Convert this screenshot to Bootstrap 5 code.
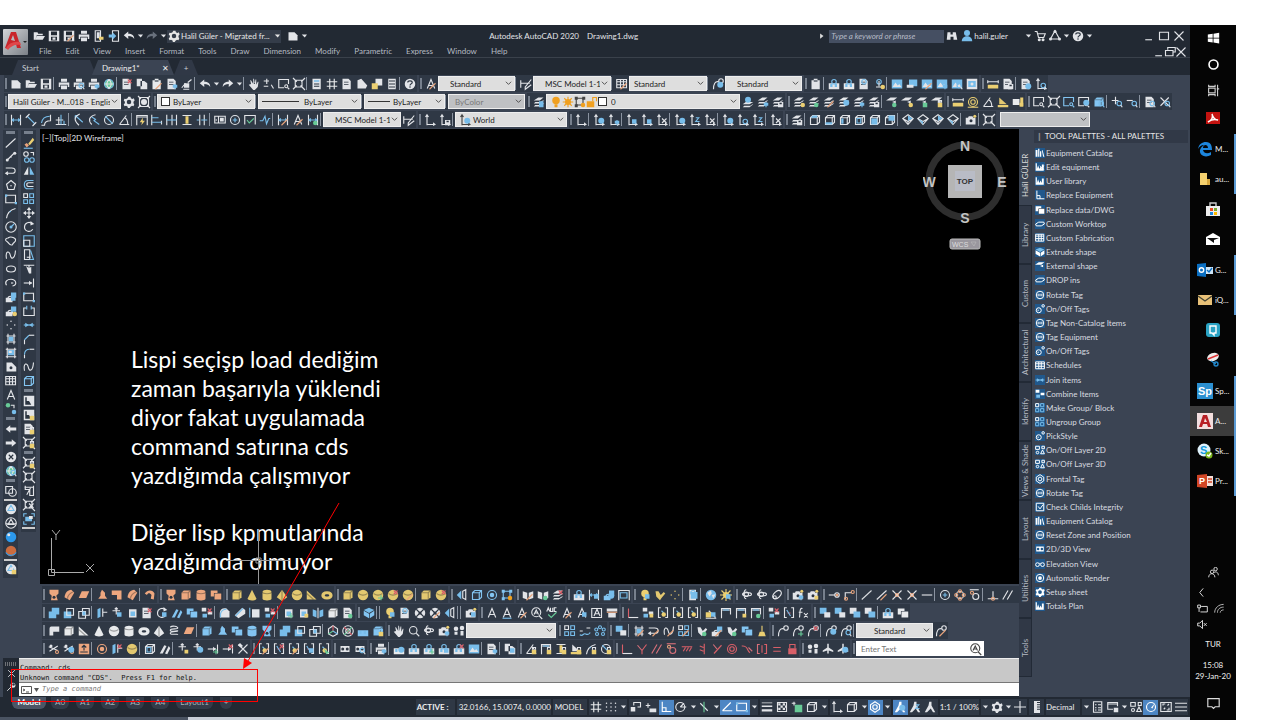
<!DOCTYPE html>
<html lang="tr">
<head>
<meta charset="utf-8">
<meta name="viewport" content="width=device-width, initial-scale=1">
<title>Autodesk AutoCAD 2020 - Drawing1.dwg</title>
<link rel="stylesheet" href="https://cdn.jsdelivr.net/npm/bootstrap@5.3.0/dist/css/bootstrap.min.css">
<style>
:root{--slate:#3b4453;--dark:#222933;--bar:#2f3845;--ink:#e2e4e8;--ac:#6fb5e8}
body{font-family:Lato,"Noto Sans",sans-serif;font-variant-ligatures:none;font-size:7px;line-height:12px;color:var(--ink);background:#fff;min-height:100vh}
.desktop{padding:25px 44px 0 0;min-height:100vh}
.app{background:var(--slate);min-width:0;position:relative}
svg.ic{width:12px;height:12px;display:block;fill:none;stroke-width:1.5;overflow:visible}
.tbtn{--bs-btn-padding-x:0;--bs-btn-padding-y:0;border:0;border-radius:0;width:15px;height:15px;display:flex;align-items:center;justify-content:center;color:var(--ink);flex:none}
.tbtn.tiny{width:8px}
.tbtn:hover{background:#566378}
.tools{display:flex;align-items:center;height:17px;background:var(--bar);flex:none}
.tools .sp{width:3px;height:13px;flex:none;border-left:1px solid #8a93a0}
.tools .grip{width:6px;height:17px;flex:none;background:linear-gradient(#77808d,#77808d) 3px 3px/2px 11px no-repeat,linear-gradient(var(--slate),var(--slate)) 0 0/2px 17px no-repeat}
.barrow{display:flex;align-items:center;height:17px;margin-bottom:1px;overflow:hidden}
.pick{appearance:none;border:1px solid #eee;border-radius:0;height:15px;background:#dedede url("data:image/svg+xml,%3Csvg xmlns='http://www.w3.org/2000/svg' viewBox='0 0 8 8'%3E%3Cpath d='M1 2l3 3 3-3' fill='none' stroke='%23444'/%3E%3C/svg%3E") right 2px center/7px 7px no-repeat;color:#222;font-size:8px;line-height:12px;padding:0 10px 0 4px;flex:none;font-family:inherit}
.pick:disabled{background-color:#bfc1c4;color:#777;opacity:1}
.pickwrap{position:relative;flex:none;display:flex}
.pickwrap>span{position:absolute;left:4px;top:1px;display:flex;pointer-events:none;align-items:center;height:13px}
.swatch{width:9px;height:9px;border:1px solid #333;background:#fff;display:block}
.lt{width:37px;height:1px;background:#333;display:block}
.titlebar{background:var(--dark)}
.logo{width:25px;height:26px;margin:4px 3px 0 3px;background:linear-gradient(135deg,#d3d5d8,#7b8087);border:0;padding:0;border-radius:1px;flex:none}
.topline{height:21px;display:flex;align-items:center;padding-top:1px}
.menu a{color:#b4b9c1;text-decoration:none;font-size:8px;line-height:11px}
.ws{background:#343c49;height:13px;color:#e6e6e6;border:0;padding:0 1px;font-size:8px;line-height:13px;display:flex;align-items:center;gap:1px;width:114px;white-space:nowrap}
.find{background:#454f62;border:0;color:#fff;font-size:8px;font-style:italic;height:13px;padding:0 2px;border-radius:0;width:115px;min-height:0}
.find::placeholder{color:#b7bcc8;opacity:1}
.tabs{height:18px;background:var(--dark);border-top:1px solid #3a414b;padding:2px 0 0 12px;display:flex}
.dtab{border:0;color:#c8ccd2;font-size:8px;line-height:14px;height:15px;background:#303846;padding:0 10px;text-align:left;clip-path:polygon(6px 0,calc(100% - 6px) 0,100% 100%,0 100%);white-space:nowrap}
.dtab.on{background:var(--slate);color:#eee}
.side{width:37px;padding:1px 0 0 3px;gap:3px;flex:none;display:flex;margin-right:3px}
.vt{width:15px;background:var(--bar);align-self:flex-start;padding-bottom:2px}
.vt .tbtn{height:14px}
.vt .grip{display:block;height:6px;margin:0 3px;background:linear-gradient(#77808d,#77808d) 0 1px/100% 3px no-repeat}
.vt .sp{display:block;height:2px;background:#ccc;margin:1px 1px}
.model{background:#000;position:relative;overflow:hidden;flex:1 1 0;min-width:0;min-height:450px}
.note{position:absolute;left:91px;top:216px;width:270px;font:23px/29px Lato,"Noto Sans",sans-serif;font-variant-ligatures:none;color:#fff}
.note p{margin:0 0 28px}
.vlabel{position:absolute;left:2px;top:3px;font-size:8px}
.cube{position:absolute;right:12px;top:9px;width:84px;height:112px}
.ucs{position:absolute;left:8px;bottom:4px}
.cross{position:absolute;left:186px;bottom:-1px}
.cmd{display:flex;background:var(--dark);height:39px;margin-left:3px;flex:none}
.hist{background:#c8c8c8;color:#111;height:25px;border-top:1px solid #eee;border-bottom:1px solid #777;font:7px/10px "DejaVu Sans Mono","Liberation Mono",monospace;padding:4px 1px 0;white-space:pre;overflow:hidden}
.cmdin{border:0;height:13px;font:italic 7px/13px "DejaVu Sans Mono",monospace;padding:0 3px;flex:1;outline:0;min-width:0;color:#333}
.cmdin::placeholder{color:#777;opacity:1}
.status{background:var(--dark);height:20px;display:flex;align-items:center;padding-left:12px;flex:none}
.lay{border:0;background:#333c49;color:#aab0b9;border-radius:0 0 6px 6px;font-size:8px;line-height:10px;padding:0 4px 2px;height:12px;align-self:flex-start}
.lay.on{color:#fff;font-weight:700;background:#4c5666;width:34px}
.sg{display:flex;align-items:center;background:#2f3845;height:16px;color:#eee;margin-right:2px;white-space:nowrap}
.sg .tbtn.hot{background:#4d86c4;color:#fff}
.pal{width:171px;flex:none;display:flex}
.ptabs{width:14px;padding-top:17px;flex:none}
.ptabs button{border:1px solid #222a36;border-right:0;background:#303846;color:#b5bac3;width:13px;height:59px;padding:0;writing-mode:vertical-rl;transform:rotate(180deg);font-size:8px;line-height:11px;display:block;text-align:center;white-space:nowrap;overflow:hidden}
.ptabs button.on{background:var(--slate);color:#ddd;border-color:var(--slate)}
.phead{background:#313947;height:13px;margin:1px 2px 3px 1px;padding-left:2px;line-height:13px;font-size:8px;color:#e6e6e6}
.plist{height:467px;font-size:8px;line-height:14px;list-style:none;margin:0;padding:0 0 0 2px}
.plist a{color:#d9dce0;text-decoration:none;display:flex;align-items:center;gap:1px;white-space:nowrap}
.plist .ic{width:10px;height:10px;background:#20588c;color:#fff;stroke-width:1.6}
.task{width:46px;background:#050505;flex:none;position:relative;color:#eee}
.task button{border:0;background:none;padding:0;height:30px;width:46px;display:flex;align-items:center;justify-content:center;color:#eee;font-size:8px;flex:none}
.task>button:nth-of-type(4n){margin-bottom:1px}
.task button.lb{justify-content:flex-start;padding-left:7px;gap:2px;border-right:2px solid #5b9bd5}
.task button.cur{background:#3c3c3c}
.task svg{width:16px;height:16px;flex:none;fill:none;stroke-width:1.4}
.task .sm svg{width:13px;height:13px}.task .xs svg{width:11px;height:11px}
.task button.sm{height:26px}
.task button.xs{height:16px}
.task button.tall{height:24px}
.foot{height:3px;background:linear-gradient(90deg,#4a5362 188px,#c9ced8 188px)}
.mark-lines{position:absolute;left:0;top:470px;pointer-events:none}
</style>
</head>
<body>
<div class="desktop d-flex">
<div class="app flex-grow-1 d-flex flex-column">
  <header class="titlebar d-flex">
    <button class="logo" aria-label="Application menu"><svg width="25" height="26" viewBox="0 0 25 26"><path d="M2 19L8 3h5l5 16h-4l-1-4H7l-2 5z" fill="#c9252b"/><path d="M8 11l2-5 2 6z" fill="#b7babf"/><path d="M3 19c3-5 8-7 14-6l1 3c-6-1-10 1-13 5z" fill="#e0474b"/><path d="M20 12h4l-2 2z" fill="#222"/></svg></button>
    <div class="flex-grow-1">
      <div class="topline">
        <span class="d-flex" data-i="open save save+pen print export mobile undo dot redo.d dot"></span>
        <button class="ws" type="button"><svg class="ic" data-g="gear"></svg>Halil Güler - Migrated fr...<svg class="ic ms-auto" data-g="dot"></svg></button>
        <span class="d-flex ms-1" data-i="new dot"></span>
        <span class="flex-grow-1 text-center" style="font-size:8px;white-space:pre">Autodesk AutoCAD 2020    Drawing1.dwg</span>
        <svg class="ic me-1" viewBox="0 0 16 16" style="width:6px"><path d="M3 1l9 7-9 7z" fill="#ddd"/></svg>
        <input class="find" aria-label="Search" placeholder="Type a keyword or phrase">
        <span class="d-flex" data-i="bino user.b"></span><span style="font-size:8px">halil.guler</span>
        <span class="d-flex ms-3" data-i="dot cart tri dot | help dot"></span>
        <span class="d-flex ms-5 me-1" data-i="min max close"></span>
      </div>
      <nav class="menu d-flex" aria-label="Menu">
        <div class="d-flex flex-grow-1" style="padding-left:8px;gap:14px" id="menu"></div>
        <span class="d-flex me-1" style="height:11px" data-i="min rest close" data-s="1"></span>
      </nav>
    </div>
  </header>
  <div class="tabs"><button class="dtab" style="width:84px">Start</button><button class="dtab on" style="width:82px;margin-left:-4px">Drawing1*<span style="margin-left:22px">✕</span></button><button class="dtab" style="width:24px;padding:0;text-align:center">+</button></div>

  <div class="toolbars" style="padding-left:2px">
    <div class="barrow"><div class="tools" data-i="|| new open save | print print+lens print+bup globe | sheet+rx copy paste.w+pen sheet+bup brush | undo dot redo dot | hand pm zoomw zoome | calc grid.w sheet folded pal2 list | help || A+pen"></div><select class="pick" style="width:77px;padding-left:11px" aria-label="Text style"><option>Standard</option></select><div class="tools" data-i="| dimstyle"></div><select class="pick" style="width:78px;padding-left:11px" aria-label="Dimension style"><option>MSC Model 1-1</option></select><div class="tools" data-i="| table+pen"></div><select class="pick" style="width:78px" aria-label="Table style"><option>Standard</option></select><div class="tools" data-i="| leader+c"></div><select class="pick" style="width:77px;padding-left:11px" aria-label="Leader style"><option>Standard</option></select><div class="tools" data-i="|| paste | dock+clip dock.w+clip sheet+clip clip+bulb | pic pic2 pic+pen pic+bup pic+lens picf || meas sheet+disk | sheet+info ucs+lens"></div></div>
    <div class="barrow"><div class="tools" data-i="||"></div><select class="pick" style="width:113px" aria-label="Workspace"><option>Halil Güler - M...018 - English</option></select><div class="tools" data-i="gear gearbox ||"></div><div class="pickwrap"><select class="pick" style="width:98px;padding-left:15px" aria-label="Color"><option>ByLayer</option></select><span><i class="swatch"></i></span></div><div class="tools" data-i="|"></div><div class="pickwrap"><select class="pick" style="width:103px;padding-left:45px" aria-label="Linetype"><option>ByLayer</option></select><span><i class="lt"></i></span></div><div class="tools" data-i="|"></div><div class="pickwrap"><select class="pick" style="width:81px;padding-left:28px" aria-label="Lineweight"><option>ByLayer</option></select><span><i class="lt" style="width:22px"></i></span></div><div class="tools" data-i="|"></div><select class="pick" disabled style="width:77px;padding-left:6px" aria-label="Plot style"><option>ByColor</option></select><div class="tools" data-i="|| layers+sheetb"></div><div class="pickwrap"><select class="pick" style="width:194px;padding-left:64px" aria-label="Layer"><option>0</option></select><span><svg class="ic" data-g="bulbo"></svg><svg class="ic" data-g="suno"></svg><svg class="ic" data-g="vpf.k"></svg><svg class="ic" data-g="unlocko"></svg><i class="swatch"></i></span></div><div class="tools" data-i="layersb layers+bup layers+disk || layers+bulb layers+gc layers+pen layers.w+c layers+bup layers+disk | plane+gc plane+bulb plane+lock plane+lk || meas ruler.y angle area.y box.w+y || zoomw zoome zoomw.b zoomw+c cbx.b+lens | plus+lens minus+lens | sheet+lens cross+lens"></div></div>
    <div class="barrow"><div class="tools" data-i="|| dimh dima arcdim dimord | rad jog dia angle | quick base cont spacey brk | tol cmark insp jogl | dimh+pen A+pen dimh+gc |"></div><select class="pick" style="width:78px;padding-left:11px" aria-label="Current dimension style"><option>MSC Model 1-1</option></select><div class="tools" data-i="dimstyle || ucs ucs+disk |"></div><div class="pickwrap"><select class="pick" style="width:112px;padding-left:17px" aria-label="UCS"><option>World</option></select><span><svg class="ic" data-g="ucs.k+c"></svg></span></div><div class="tools" data-i="|| ucs | ucs+c ucs+bup | ucs+sq ucs+sq ucs+x | ucs+c ucs+z ucs+x | ucs+c ucs+lens ucs+z | ucs+x || layers+disk | cube1 cube2 cube3 cube4 cube5 cube6 | iso1 iso2 iso1 iso2 | camera | zoome"></div><select class="pick ms-1" disabled style="width:90px" aria-label="View"><option></option></select></div>
  </div>

  <div class="d-flex flex-grow-1">
    <main class="d-flex flex-column flex-grow-1" style="min-width:0">
      <div class="d-flex flex-grow-1">
        <div class="side">
          <div class="vt" data-i="|| line xline pline pgon rect arc circ cloud spline ell earc blk+sq blk+bulb pts hatch grad region table A gc2 || left right cx globe+lens || union | ball1 tri2 ballb ballo | ball1+lk"></div>
          <div class="vt" data-i="|| eraser copy2 mirror offs array move rot scale stretch trim ext rect brkpt join cham fil spline cube.b || ref ref+lk sheet+lk zoome+lk || zoome+lk zoome zoome2 zoome+x frame |"></div>
        </div>
        <section class="model" aria-label="Drawing">
          <div class="vlabel">[−][Top][2D Wireframe]</div>
          <svg class="cube" viewBox="0 0 84 112" font-family="Liberation Sans" font-weight="700"><circle cx="42" cy="43" r="36" fill="none" stroke="#2e2e2e" stroke-width="7"/><rect x="25" y="27" width="34" height="33" fill="#b5b5b5"/><rect x="32" y="33" width="20" height="20" fill="#b9bcc6"/><text x="42" y="46" font-size="8" text-anchor="middle" fill="#333">TOP</text><g font-size="14" text-anchor="middle" fill="#c4c4c4"><text x="42" y="13">N</text><text x="42" y="85">S</text><text x="6" y="49">W</text><text x="79" y="49">E</text></g><rect x="27" y="101" width="30" height="10" rx="2" fill="#9a979e" stroke="#bbb"/><text x="29" y="109" font-size="7" fill="#ddd" font-weight="400">WCS</text><path d="M48 104h5l-2 4z" fill="none" stroke="#bbb" stroke-width=".6"/></svg>
          <svg class="ucs" width="50" height="50" fill="none" stroke="#aaa"><path d="M3.500 8V42.500H36M.5 39.500h6v6h-6zM4 0l4 5 4-5M8 5v5M38 34l8 8M46 34l-8 8"/></svg>
          <div class="note"><p>Lispi seçişp load dediğim zaman başarıyla yüklendi diyor fakat uygulamada command satırına cds yazdığımda çalışmıyor</p><p>Diğer lisp kpmutlarında yazdığımda olmuyor</p></div>
          <svg class="cross" width="66" height="56" stroke="#999" fill="none"><path d="M32.500 0V56M0 31.500H64M30 29h5v5h-5z"/></svg>
        </section>
      </div>
      <div style="margin:2px 0 0 40px;flex:none">
        <div class="barrow"><div class="tools" data-i="|| loft.o sweep.o plane2.o | ext2.o ell2.o sweep.o | bend.o || loft.o cbx.o cyl.o boxes.o || cbx.y cone.y cyl.y pyr.y sphere.y wedge.y torus.y || cbx.y sphere.y sphere.y+gp sphere.y+rx sphere.y+pen | cbx.y sphere.y+rx || tog cube.b ring.b vpf.b || book+pen book+gc layers+rx || dock+clip dimh+sq blk.b+c quickb || bulb.y+sq brush2.y pts.y | sheetb+clip | globe2 sun.y+sq || orbit orbit orbit2 || camera+bup camera+y || snap1 snap2 | line.o2 line+pen cross2 cross2 dash | cmark quad tan | perp par node"></div></div>
        <div class="barrow"><div class="tools" data-i="|| union2 sub2 int2 | press mv+sq sq3 sheet+rx rot+sq slant.b boxes.b arr+rx | fillet chamf shell arr+rx | sq3+gp sq3+y mirror2 cbx.w sheet+gc || iso.b | | bulb.y+sq sheet+clip wheel wheel+pen tog | | camera+sq || A A+u A+pen lensA abc A+pen A+sq boxA scaleA || perpL arr+y conY conY conY | lk+sq dimv dimv+y dimv+gc | arr+rx conG fx || ord1 ord1 ord2 ord2 | dock+clip boxes.w"></div></div>
        <div class="barrow"><div class="tools" data-i="|| psol cbx.w wedge.w cone.w sphere.w cyl.w torus.w pyr.w helix plane2.o | cbx.b ext2.b boxes.b cyl.b loft.b | union2 sub2 int2 | wire1 wheel2 dock.b cbx.b+lk || hand lens orbit camera+bup foot"></div><select class="pick" style="width:90px" aria-label="Visual style"><option></option></select><div class="tools" data-i="|| array pathar polar || ord1 | hatch+pen pline+pen spline+pen array+pen | brush2+gc blk+pen brush2+gc boxes.b broom || leader leader+gp leader+rx | leader+c leader+lens |"></div><select class="pick" style="width:77px;padding-left:17px" aria-label="Multileader style"><option>Standard</option></select><div class="tools" data-i="leader+pen"></div></div>
        <div class="barrow"><div class="tools" data-i="|| scis scis+c imp.o | ring.o press+rx sphere.y | cube4 slant | mv+y mv+c ext+gp ext+rx tools2 || conY+pen conG+rx conY+pen conG+sq conY+cur || mesh mesh+lens || print+bup | dock.w+c dock+clip dock+clip+gp dock+clip+sq dock+clip+rx pic | sheet+bup | copy+sq || angle+lk dimv+lk spacey+lk area+lk arc+lk dia+lk || perpL coin.r par.r tan.r hor.r ver.r sym.r conc.r smo.r symm.r eq.r lockr.r || foot fly fly+c ||"></div><div class="pickwrap"><input aria-label="Find text" placeholder="Enter Text" style="width:128px;height:15px;font-size:8px;border:1px solid #fff;padding:0 4px"><span style="left:114px"><svg class="ic" data-g="lensA.k"></svg></span></div></div>
      </div>
      <div class="cmd">
        <div style="width:16px" class="d-flex flex-column align-items-center justify-content-between py-1 flex-shrink-0"><svg width="12" height="4"><path d="M0 1h12M0 3h12" stroke="#bbb" stroke-dasharray="1 1"/></svg><svg class="ic" data-g="close" style="width:9px;height:9px"></svg><svg class="ic" data-g="wrench" style="width:10px"></svg></div>
        <div class="flex-grow-1" style="min-width:0"><div class="hist">Command: cds
Unknown command "CDS".  Press F1 for help.</div>
        <div class="bg-white d-flex align-items-center" style="padding-left:2px"><svg width="18" height="10" fill="none" stroke="#555"><path d="M.5 1.500h10v7H.5zM2 4l2 1-2 1M5 7h3"/><path d="M13 3h5l-2.500 4z" fill="#555" stroke="none"/></svg><input class="cmdin" aria-label="Command line" placeholder="Type a command"></div></div>
      </div>
    </main>
    <aside class="pal">
      <div class="ptabs" id="ptabs"></div>
      <div class="flex-grow-1"><div class="phead"><span style="color:#888">❙</span> TOOL PALETTES - ALL PALETTES</div>
      <ul class="plist d-flex flex-column justify-content-between" id="plist"></ul></div>
    </aside>
  </div>
  <footer class="status">
    <button class="lay on">Model</button><div class="d-flex align-self-start flex-grow-1" style="gap:7px;margin-left:5px"><button class="lay">A0</button><button class="lay">A1</button><button class="lay">A2</button><button class="lay">A3</button><button class="lay">A4</button><button class="lay">Layout1</button><button class="lay">+</button></div>
    <div class="d-flex" style="font-size:8px">
      <div class="sg fw-bold" style="width:39px;padding-left:1px">ACTIVE :</div><div class="sg" style="width:94px;padding-left:2px">32.0166, 15.0074, 0.0000</div><div class="sg" style="width:34px;padding-left:2px">MODEL</div>
      <div class="sg" data-i="grid.w dots dot"></div><div class="sg" data-i="snapm dyn perpW! polar2 dot iso3 dot otr! rect! dot"></div><div class="sg" data-i="lw trans sel cube dot"></div><div class="sg" data-i="ucs cube dot gizmo! dot"></div><div class="sg" data-i="man+c! man+z man"></div><div class="sg">1:1 / 100%</div><div class="sg" data-i="dot gear dot plus3"></div><div class="sg" data-i="rul"></div><div class="sg" style="width:34px">Decimal</div><div class="sg" data-i="dot list2 lockui dot isol perf! full ham"></div>
    </div>
  </footer>
  <div class="foot"></div>
  <svg class="mark-lines" width="360" height="212" fill="none" stroke="#f00"><rect x="11.500" y="174.500" width="246" height="32"/><path d="M339 8L248 166"/><path d="M243 174l1-11 8 5z" fill="#f00" stroke="none"/></svg>
</div>
<aside class="task d-flex flex-column" id="task" aria-label="Taskbar">
  <button class="sm" aria-label="Start"><svg viewBox="0 0 16 16"><path fill="#fff" d="M1 3l6-1v5H1zM8 2l7-1v6H8zM1 8h6v5l-6-1zM8 8h7v6l-7-1z"/></svg></button>
  <button class="sm" aria-label="Cortana"><svg viewBox="0 0 16 16"><circle cx="8" cy="8" r="5.500" stroke="#fff" stroke-width="2"/></svg></button>
  <button class="sm" aria-label="Task view"><svg viewBox="0 0 16 16" stroke="#ccc"><path d="M2 1v2h8V1M2 15v-2h8v2M2 5h8v6H2zM13 1v14M12 6h3"/></svg></button>
  <button aria-label="Adobe"><svg viewBox="0 0 16 16"><path fill="#c41310" d="M1 2h14v12H1z"/><path stroke="#fff" d="M7 4c2 5-2 7-4 8 4-3 7-3 10-2-3 0-5-2-6-6z"/></svg></button>
  <button class="lb"><svg viewBox="0 0 16 16"><path fill="#1d86dd" d="M1 8C2 3 5 1 9 1c5 0 6 4 6 8H6c1 4 5 4 8 2v3c-5 3-12 1-11-5 1-3 3-4 4-5-3 0-5 2-6 4zm5-1h5c0-4-5-4-5 0z"/></svg>M...</button>
  <button class="lb"><svg viewBox="0 0 16 16"><path fill="#f5d16e" d="M3 2h7v12H3z"/><path fill="#d9a83c" d="M10 8h3v6h-3z"/></svg>au...</button>
  <button aria-label="Store"><svg viewBox="0 0 16 16"><path fill="#eee" d="M1 5h14v10H1z"/><path stroke="#ccc" d="M5 5V2h6v3"/><path fill="#e64b21" d="M5 7h3v3H5z"/><path fill="#7a3" d="M9 7h3v3H9z"/><path fill="#28d" d="M5 11h3v3H5z"/><path fill="#fb0" d="M9 11h3v3H9z"/></svg></button>
  <button aria-label="Mail"><svg viewBox="0 0 16 16"><path fill="#fff" d="M1 6l7-4 7 4v8H1z"/><path fill="#111" d="M2 7h12L9 9v3z"/></svg></button>
  <button class="lb"><svg viewBox="0 0 16 16"><path fill="#0a6fc2" d="M0 2l9-1v14l-9-1z"/><path fill="#cfe5f7" d="M9 5h7v7H9z"/><circle cx="4.500" cy="8" r="2.200" stroke="#fff"/><path stroke="#0a6fc2" d="M10 8l2 2 3-4"/></svg>G...</button>
  <button class="lb"><svg viewBox="0 0 16 16"><path fill="#e8c178" d="M1 3h14v10H1z"/><path stroke="#443" d="M1 4l7 5 7-5"/></svg>iQ...</button>
  <button aria-label="Quick Assist"><svg viewBox="0 0 16 16"><rect x="1" y="1" width="14" height="14" rx="3" fill="#2aa3c4"/><path stroke="#fff" d="M5 4h6v7H9v2l-2-2H5z"/></svg></button>
  <button aria-label="Snip"><svg viewBox="0 0 16 16"><ellipse cx="8" cy="5" rx="6" ry="4" fill="#eee" transform="rotate(-20 8 5)"/><path stroke="#d33" d="M3 7l10-4"/><path stroke="#28c" d="M6 9l5 3"/><circle cx="11" cy="12" r="2" stroke="#28c"/></svg></button>
  <button class="lb"><svg viewBox="0 0 16 16"><path fill="#2b8fd0" d="M0 0h16v16H0z"/><text x="1" y="12" font-size="11" font-weight="700" fill="#fff" font-family="Liberation Sans">Sp</text></svg>Sp...</button>
  <button class="lb cur"><svg viewBox="0 0 16 16"><path fill="#f3dedd" d="M0 0h16v16H0z"/><path fill="#b81f24" fill-rule="evenodd" d="M2 14L6 2h4l4 12h-3l-1-3H6l-1 3zM7 9h3L8 5z"/></svg>A...</button>
  <button class="lb"><svg viewBox="0 0 16 16"><circle cx="7" cy="7" r="6.500" fill="#dff2fc"/><text x="3" y="11" font-size="11" font-weight="700" fill="#1199dd" font-family="Liberation Sans">S</text><circle cx="12" cy="12" r="3.500" fill="#7ab51d"/><path stroke="#fff" d="M10 12l2 1 2-3"/></svg>Sk...</button>
  <button class="lb"><svg viewBox="0 0 16 16"><path fill="#d24625" d="M0 2l10-1v14L0 14z"/><path fill="#f4ded8" d="M10 3h6v10h-6z"/><path stroke="#d24625" d="M11 6h4M11 9h4"/><text x="2" y="11" font-size="9" font-weight="700" fill="#fff" font-family="Liberation Sans">P</text></svg>Pr...</button>
  <div class="mt-auto d-flex flex-column">
  <button class="xs tall" aria-label="People"><svg viewBox="0 0 16 16" stroke="#ddd"><circle cx="6" cy="7" r="2.500"/><circle cx="11" cy="3" r="2.500"/><path d="M1 15c0-7 9-7 9 0M9 8c3-2 6 0 6 4"/></svg></button>
  <button class="xs lb border-0" aria-label="Hidden icons"><svg viewBox="0 0 16 16" stroke="#ddd"><path d="M9 2L4 8l5 6"/></svg></button>
  <button class="xs lb border-0" style="gap:6px" aria-label="Battery and network"><svg viewBox="0 0 16 16" stroke="#ddd"><path d="M6 5h9v8H5M1 3v4h4V3zM3 7v6"/></svg><svg viewBox="0 0 16 16" stroke="#bbb"><path d="M1 14C1 7 7 2 14 2M5 14c0-5 4-8 9-8M9 14c0-2 2-4 5-4"/></svg></button>
  <button class="xs lb border-0" aria-label="Volume"><svg viewBox="0 0 16 16" stroke="#ddd"><path d="M1 6h3l4-4v12l-4-4H1zM10 6l4 4M14 6l-4 4"/></svg></button>
  <button class="xs tall">TUR</button>
  <button class="text-center" style="line-height:11px;white-space:nowrap"><span>15:08<br>29-Jan-20</span></button>
  <button style="height:34px" class="sm" aria-label="Notifications"><svg viewBox="0 0 16 16" stroke="#ddd"><path d="M1 2h14v10h-5l-2 2-2-2H1z"/></svg></button>
  </div>
</aside>
</div>
<script src="https://cdn.jsdelivr.net/npm/bootstrap@5.3.0/dist/js/bootstrap.bundle.min.js"></script>
<script>
// Each icon is a list of "<mode><colour> <path>" layers on a 16 x 16 grid; Ox,y,r is a circle.
const cube='M2 5l3-3h9v9l-3 3H2zM2 5h9v9M11 5l3-3';
const G={
new:'fw M2 3h8l4 4v7H2z',open:'fw M1 13V3h5l1 2h6v2H5l-2 6zM5 8h11l-3 5H3z',save:'fw M1 1h14v14H1zM4 2v5h8V2zM4 9v5h8V9z|fw M6 10h4v3H6z',
print:'fw M4 1h8v4H4zM1 6h14v6h-2V9H3v3H1zM4 10h8v5H4z',export:'sw M3 1h7v14H3z|fw M5 3h4v8H5z|fy M8 9h6v4H8z',mobile:'sw M6 1h8v14H6z|fb M1 6h5V3l5 5-5 5v-3H1z',
undo:'fw M1 7l6-5v3c5 0 8 2 8 7-2-3-4-4-8-4v4z',redo:'fw M15 7L9 2v3c-5 0-8 2-8 7 2-3 4-4 8-4v4z',dot:'fw M5 6h7l-3 4z',
gear:'fw M7 1h3l.5 2 2 1 2-1 1 3-1.500 1.500v2L15 11l-1 2.500-2-.5-2 1.200L9 16H6.500L6 14l-2-1-2 .5L1 11l1.500-1.500v-2L1 6l1-2.500 2 .5 2-1zO8,8,3',gearbox:'sw M2 2h12v12H2z|fw O8,8,4|sw M0 0l4 4M16 0l-4 4M0 16l4-4M16 16l-4-4',
bino:'fw M2 3h4v3h3V3h4l2 10h-5V9H6v4H1z',user:'fb O8,4,4|fb M1 15c0-9 14-9 14 0z',cart:'sw M1 2h3l2 8h7l2-5H5|fw O7,13,2|fw O12,13,2',tri:'sw M8 1l6 11H2z|fw O8,2,2|fw O2,12,2|fw O14,12,2',
help:'fw O8,8,7|sk M5 6c0-3 6-3 6 0 0 2-3 1-3 4M8 11v2',min:'sw M3 13h9',max:'sw M2 3h12v10H2z',close:'sw M2 2l12 12M14 2L2 14',rest:'sw M5 5V2h10v6h-3M2 6h10v7H2z',
globe:'fg O8,8,6|sb O8,8,6|sw M2 8h12M8 2c-4 4-4 8 0 12 4-4 4-8 0-12',globe2:'fb O8,8,7|fw M3 5l5-3 1 4-3 4zM9 8l5-1-3 6z',sheet:'fw M2 1h8l3 3v11H2zM4 5v1h6V5zM4 8v1h6V8z',sheetb:'fw M3 1h9v14H3z|fb M5 4h9v9H5z',copy:'fw M1 1h7v10H1zM6 4h5l4 3v8H6z',paste:'fw M2 3h3V1h5v2h3v12H2z|sk M5 4h5',brush:'sw M1 13l5-6M3 15h8|fw M4 7h7v6H4z|sw M9 6l5-4',
hand:'fw M4 8L3 3h1l3 5V1h1l1 7 1-6h1l0 7 2-4h1l-1 7-4 4H7L1 9z',pm:'sw M1 4h7M5 1v7M1 11h6M11 9l3 5',lens:'sw O7,7,5|sw M11 11l4 4',zoomw:'sw M8 13H1V2h13v6|sw O11,11,2|sw M13 13l2 2',zoome:'sw M3 3h9v9H3zM0 0l5 5M16 0l-5 5M0 15l5-5M10 10l6 6',zoome2:'sw M2 3h12M3 1v5h6v8h5V1M10 4l-5 9',frame:'sb M1 5V1h4M11 1h4v4M15 11v4h-4M5 15H1v-4|fb M3 5h9v6H3z|fw M8 4h5v4H8z',
calc:'fw M2 1h11v14H2z|fb M4 3h7v2H4z|sk M4 8h7M4 11h7',grid:'sw M5 1v14M11 1v14M1 5h14M1 11h14',folded:'fw M2 3l5-2 8 9-2 4H2z',pal2:'fw M6 1h9v9H6z|fy M1 7h8v8H1z',list:'fw M3 1h10v14H3z|sk M4 4h8M4 8h8M4 12h8',list2:'sw M2 1h11v14H2z|sw M4 5h2M8 5h4M4 9h2M8 9h4M4 12h2M8 12h4',
A:'sw M3 14L8 2l5 12M5 10h6',dimstyle:'sw M1 7h12M1 3v10M15 2L7 12v3l8-6',table:'sw M1 2h13v11H1zM1 5h13M1 9h13M6 2v11M10 2v11',leader:'sw M2 15C2 8 4 4 9 5|sw O12,4,3',
dock:'fw M1 7h14v8H1z|fb M3 8h3v4H3zM9 8h3v4H9z',clip:'sb O8,5,3|sw M8 4v7M4 12h8',pic:'fb M1 2h14v12H1z|fw M2 12l4-6 3 4 2-2 3 4z',pic2:'fb M4 2h11v9H4z|fw M1 9h9v4H1z',picf:'fw M1 1h14v14H1z|fb M3 4h10v8H3z|fw O8,8,2',meas:'sw M1 3v4M15 3v4M1 5h14|fy M1 9h14v5H1z',
layers:'fw M1 6l6-4h7l-5 4zM1 10l2-2h7l3-2h2l-6 4zM1 14l2-2h7l3-2h2l-6 4z',layersb:'fw M1 11l4-3h10l-5 3z|fw M1 15l2-2h8l3-2h1l-5 4z|fb O8,5,4',bulb:'fy O8,6,5|fy M6 11h4v4H6z',sun:'fy O8,8,4|sy M8 0v16M0 8h16M2 2l12 12M14 2L2 14',
bulbo:'fY O8,6,5|fY M6 11h4v4H6z',suno:'fY O8,8,4|sY M8 1v14M1 8h14M3 3l10 10M13 3L3 13',unlocko:'fY M1 7h10v8H1z|sY M9 7V2h5v5',
vpf:'sw M3 3h9v9H3z|fw M1 1h4v4H1zM11 1h4v4h-4zM1 11h4v4H1z|fY O12,12,3',
plane:'fw M0 6l6-4h9l-5 4z|fw M8 8l5-2v4z',ruler:'sy O8,8,6|sw O8,8,3|sw M1 15h14',angle:'sw M2 14L11 2M2 14h13M9 5c4 2 4 5 4 9',area:'fw M3 2l10 9H3z|fy M1 12h14v3H1z',box:'fw M1 4h9v8H1z|fy M11 2h4v12h-4z',cube:'sw '+cube,cbx:'fw M2 5l3-3h9v9l-3 3H2z|sh M2 5h9v9M11 5l3-3',plus:'sw M1 6h9M6 1v10',minus:'sw M1 6h8',cross:'sw M2 2l11 11M13 2L2 13',plus3:'sw M0 8h16M8 0v16',
dimh:'sw M2 1v14M14 1v14|sb M2 8h12M5 6L3 8l2 2M11 6l2 2-2 2',dima:'sb M3 3l10 10|sw M1 5l5-5M10 16l5-5',arcdim:'sb M2 12C3 6 6 3 13 3|sw M2 15h4c0-4 3-6 8-6V1',dimord:'sw M1 14h14M5 14V4M1 8h10|sb M8 1v13M12 9v5',rad:'sb M3 2l10 9M3 2v4M3 2h4|sw M9 0C0 4 2 10 8 15',jog:'sw M10 1C1 3 0 9 5 14|sb M5 4l5 3-2 2 7 5',dia:'sw O8,8,6|sb M3 3l10 10',quick:'sw M1 15V2h14v13M1 4h14|fy M9 5l-4 6h3l-1 4 5-6H9z',quickb:'sw M1 15V2h14v13|sb M3 5h9v7H3z',base:'sw M1 1v14M14 9v5|sb M1 5h9M1 11h13',cont:'sw M1 1v14M8 1v14M14 1v14|sb M1 8h13',spacey:'sw M2 2h12M2 14h12|fy M6 3h4v10H6z',brk:'sw M5 1v14M11 1v14|sb M1 8h3M7 8h8',
tol:'sw M1 3h14v9H1zM6 3v9|fw M8 5h5v5H8z|fw O3,8,1',cmark:'sw O8,8,6|sb M8 5v6M5 8h6',insp:'sw M1 14V2h14v12|sg M4 8l3 4 6-6',jogl:'sb M1 9h4l3-6 2 10 3-7h2',ucs:'sw M4 15V2M2 4l2-3 2 3M4 14h9|fw M12 11l4 3-4 2z',cube1:'sw '+cube+'|fb M2 5h9V2H5z',cube2:'sw '+cube+'|fb M2 11h9v3H2z',cube3:'sw '+cube+'|fb M3 6h3v7H3z',cube4:'sw '+cube+'|sb M4 6h5v6H4z',cube5:'sw '+cube+'|fb M3 6h8v8H3z',cube6:'sw '+cube+'|fb M6 2h8v7H6z',
iso1:'sw M8 1l7 5-7 8-7-8zM1 6l7 4 7-4M8 10v4|fb M8 2l6 4-6 3z',iso2:'sw M8 1l7 5-7 8-7-8zM1 6l7 4 7-4|fb M2 7l6 3v4z',iso:'fb M8 1l7 3-7 4-7-4z|fw M1 5l7 4v6l-7-4zM15 5L9 9v6l6-4z',camera:'fw M1 5h3l1-2h5l1 2h3v9H1z|fk O8,9,2|fy O13,3,2',
line:'sw M1 14L14 2',xline:'sw M2 13L13 2|fw O3,12,2|fw O13,3,2|fw O8,8,1',pline:'sw M1 4h8c6 0 6 7 0 7H1M4 9l-3 2 3 2',pgon:'sw M8 2l6 5-2 7H4L2 7z|fw O8,9,1',rect:'sw M1 3h13v10H1z|fb M0 2h3v3H0zM13 12h3v3h-3z',arc:'sw M2 15C3 8 6 4 14 2|fb O7,6,1',circ:'sw O8,8,7|sb M8 8l4-4|fb O8,8,2',cloud:'sw M4 4c4-3 11 0 10 3 1 2-4 3-4 6-4 2-5-3-7-4-4-2-2-5 1-5z',spline:'sw M2 13C0 2 6 2 7 8s6 7 7-6',ell:'sw M8 4C0 4 0 12 8 12S16 4 8 4',earc:'sw M2 11C-1 6 3 3 8 3c7 0 9 8 2 9|sw M8 8h3',
blk:'fw M1 9h9v6H1z|sw O7,10,3|fb M8 2h7v7H8z',pts:'fw O8,3,1|fw O3,8,1|fw O13,8,1|fw O8,13,1',hatch:'sw M2 4h12M2 12h12M4 1v14M12 1v14|fb M5 5h6v6H5z',grad:'sw M1 3h14M1 13h14M3 1v14M13 1v14|fb M4 4h8v7H4z|fw M5 5h4v3H5z',region:'fw M2 2h7l6 6v6H2zO8,9,2',gc2:'fg O4,3,3|fb O12,12,3|sw M8 3h4v4',left:'fw M1 8l6-5v3h8v4H7v3z',right:'fw M15 8L9 3v3H1v4h8v3z',cx:'fw O8,8,7|sk M5 5l6 6M11 5l-6 6',union:'sw M1 2h9v9H1z|sw O10,10,5',ball1:'fw O8,8,7|sb M8 3l4 7H4z',tri2:'sw O8,8,7|sw M8 3l4 7H4zM1 9h14',ballb:'fB O8,8,7|fw O5,5,2',ballo:'fO O8,8,7|sB M1 10c4 6 12 4 14 0',
eraser:'fy M7 9L13 1l2 3-6 7z|fo M2 10l3-2 3 3-3 3z|sb M1 15h12',copy2:'sw O4,4,3|sw M10 2h4v4|sb O5,12,3|sb O12,12,3',mirror:'fw M7 2v11H1z|fb M9 2v11h6z',offs:'sb M14 2H7c-7 0-7 11 0 11h7|sw M14 5H8c-4 0-4 5 0 5h6',array:'sw M1 1h5v5H1z|sb M9 1h5v5H9zM1 9h5v5H1zM9 9h5v5H9z',move:'fw M8 0l3 4H5zM8 16l3-4H5zM0 8l4-3v6zM16 8l-4-3v6z|sw M3 8h10M8 3v10',rot:'sw M13 11C10 16 2 14 2 8s7-8 10-4|fw M10 0l5 4-5 2z',scale:'sb M1 1h14v14H1z|sw M1 7h8v8H1z',stretch:'sw M2 1h7v13H2z|sb M10 2l4 12H9|sw M5 11h5',trim:'sw M1 3h14M8 3v5|fw M4 4l4 3 3-2v9H8l-2-5z',ext:'sw M14 2v12|sw M1 8h11|fw M8 5l4 3-4 3z',brkpt:'sw M5 4H1v10h14V4h-4|sb M5 1v5M11 1v5',join:'sb M1 8h14|fb M3 5l5 3-5 3zM13 5L8 8l5 3z',cham:'sw M2 15V9|sb M2 9l6-6|sw M8 3h7',fil:'sw M2 15v-5|sb M2 10c0-5 3-7 7-7|sw M9 3h6',ref:'fw M1 1h14v14H1z|fk M3 3v10h8l-3-5H5V3z',
loft:'fw M2 1h12v5l-3 3 2 6H4l1-6-3-3z|fk O8,11,2',sweep:'fw M2 11C3 4 6 2 11 1l4 4-6 10z|sh M6 13C6 8 9 6 13 4',plane2:'fw M5 3h10l-4 9H1z',ext2:'fw M3 13h12l-3-4V5L8 1 6 5v4z',ell2:'fw M1 2h13v12H8V8H1z',bend:'fw M1 6C5 0 12 1 14 6l-1 8-4-1 1-5c-2-3-5-3-6 0z',cyl:'fw M2 4c0-4 12-4 12 0v9c0 3-12 3-12 0z|sh M2 4c0 3 12 3 12 0',boxes:'fw M1 2h9v8H1z|sk M6 6h9v8H6z|fw M6 6h9v8H6z',cone:'fw M8 1l6 12c-1 3-11 3-12 0z',pyr:'fw M8 1l7 10-7 5-7-5z|sh M8 1v14',sphere:'fw O8,8,7|sh M2 6c4 3 8 3 12 0',wedge:'fw M1 2l13 12H1z|sh M1 6l9 8',torus:'fw M8 3C-2 3-2 14 8 14S18 3 8 3zM8 7c4 0 4 3 0 3s-4-3 0-3z',tog:'fb M7 2L1 8l6 6z|sw M9 3l4-2v13l-4-2z',ring:'sw O8,8,6|fw O8,8,3',book:'fw M1 3l6 2v9l-6-2zM15 3L9 5v9l6-2z',brush2:'fw M2 3h4l3 5 4-4 2 2-5 6-2 3-5-5z',orbit:'sw O7,7,3|sw M2 7c0 3 12 3 12 0S2 4 2 7M7 1c-4 0-4 12 0 12',orbit2:'sw M3 12C0 8 9-1 13 3c3 4-5 13-10 9z|sw O5,11,2',
snap1:'sw M1 8h8|fo O12,8,2|sw O12,8,3',snap2:'sw M3 14V5h8|so O4,13,2|so O13,4,2',cross2:'sw M2 2l12 12M14 2L2 14|so O8,8,2',dash:'sw M1 8h14',quad:'sw O8,8,5|so O8,3,2|so O8,13,2|so O3,8,2|so O13,8,2',tan:'sw O9,10,4|so O4,5,2|sw M1 1h12',perp:'sw M1 13h14M8 3v10|so O8,13,2',par:'sw M1 14L8 2M7 14l7-12',node:'sw O8,8,4',
union2:'fb M5 1h10v9h-4v5H1V6h4z',sub2:'fb M1 6h10v9H1z|sw M5 2h9v9H5z',int2:'sw M1 6h9v9H1zM6 2h9v9H6z|fb M6 6h4v5H6z',press:'fb M2 3l4-2v12l-4 2z|sw M9 2v11M9 7h6',mv:'sw M7 1v9M2 5h10M5 3l2-2 2 2',sq3:'fw M4 3h10v11H4z|fb M6 6h6v6H6z',slant:'fw M1 14L7 3l3 1-5 10zM8 14l5-10 2 3-4 8z',arr:'fw M1 1h6v5H1zM9 6h6v4H9z|fb M2 9h6v5H2z',fillet:'fw M1 14V8c0-5 4-7 9-6l4 4v8z|sb M2 14V9c1-4 4-6 8-6',chamf:'fw M1 11L11 1l4 3v5L6 15z|sb M2 12L12 2',shell:'fw M4 3h10v11H4z|sb M1 1v13',mirror2:'fb M1 3l5 2v9l-5-2zM15 3l-5 2v9l5-2z|sw M8 1v14',wheel:'fw O8,8,7|sk M3 3l10 10M13 3L3 13|fk O8,8,2',lensA:'sw O7,7,6|sw M11 12l4 4M4 10l3-6 3 6M5 8h4',abc:'sw M1 6l2-5 2 5M6 1v5h3V1M14 1h-3v5h3|sg M3 10l4 4 7-7',boxA:'sw M1 2h13v12H1zM4 12l4-9 4 9M5 9h5',scaleA:'fw M1 2h14v4H1zM3 8h10v6H3z|so M1 7h14',perpL:'sr M2 2v12|sw M2 14h13',conY:'sw M5 1H2v13h3M11 1h3v13h-3|sb M6 5l3 3|fy O9,10,3',conG:'sw M5 1H2v13h3M11 1h3v13h-3|sr M6 8h4|sb M5 4l5 8',dimv:'sw M2 15V2h12v8M2 4h12|sb M4 4l8 0',lk:'sw M1 15h14M5 5l9 9|fy M1 7h7v7H1z',fx:'sw M6 2c-4-1-3 4-4 12M1 7h5M8 8l5 6M13 8l-5 6',
ord1:'fb M1 1h9v8H1z|fw M7 7h8v7H7z',ord2:'fw M1 1h9v8H1z|fb M6 6h9v8H6z',psol:'fw M2 14V5c0-3 2-3 4-3h9v7H7v5z',helix:'sw M3 3c3-3 10-1 10 1S3 4 3 7s10 0 10 1-10 0-10 3 10 0 10 2',wire1:'sw M8 1l6 4v7l-6 3-6-3V5z|sr M8 1v7|sg M2 12l6-4|sb M14 12L8 8',wheel2:'sw O8,8,7|sr M3 3l10 10|sg M13 3L3 13|sw O8,8,3',foot:'fw O4,5,3|fw M2 9h4v4H2z|fw O12,4,3|fw M10 8h4v6h-4z',pathar:'sw M1 8h4M10 4h5|sb M1 13c5 3 4-3 8-1s5-1 6-2',polar:'sb O8,3,2|sb O3,6,2|sb O13,6,2|sb O4,12,2|sb O12,12,2',broom:'sy M8 1v8|fy M5 9h6l2 6H3z',
scis:'sw M1 5l12 5M2 11L13 4|fw O4,4,2|so O12,12,2',imp:'fw M1 1h14v14H1z|sk M8 10V4M5 6l3-3 3 3M3 12h10',tools2:'sw M2 2l12 12M14 2L2 14|fw M1 3l3-3 4 4-3 2z',mesh:'fw M2 4h12v8H2zO5,8,2O11,8,2',coin:'sw M2 3l6 7|sr M8 10l6-8M8 10v5',hor:'sr M1 5h14M3 11l3-5M7 11l3-5M11 11l3-5',ver:'sr M11 1v14M5 4l5 2M5 9l5 2',sym:'sw M3 2l5 6|sr M14 3L4 14',conc:'sr O8,8,6|sr O8,8,3',smo:'sr M1 4c9-1 6 6 11 9|sw M10 6l5 5',symm:'sw M5 2H2v12h3|sr M11 2h3v12h-3M8 3v10',eq:'sr M3 6h10M3 11h10',lockr:'fr M3 7h11v8H3z|sr M5 7V2h7v5',fly:'fw M7 1h2v5l6 4v2l-6-2v4H7v-4l-6 2v-2l6-4z',
wrench:'sw M2 14l7-7|fw O11,5,4|fk O12,4,2',dots:'fw O2,3,1|fw O8,3,1|fw O14,3,1|fw O2,8,1|fw O8,8,1|fw O14,8,1|fw O2,13,1|fw O8,13,1|fw O14,13,1',snapm:'fw M1 8h6v6H1z|sw M5 6V2h9v6h-4',dyn:'sw M1 6h6M4 3v6|fw M6 10h9v5H6z',perpW:'sw M3 1v13h12M3 9h5v5',polar2:'sw O7,8,6|sw M7 8h8M7 8l5-5',iso3:'sw M3 3l10 10|sg M8 1v14',otr:'sw M2 13L13 2M2 13h13',lw:'fw M1 2h14v1H1zM1 6h14v2H1zM1 11h14v3H1z',trans:'sw M2 2h12v12H2z|fw M3 3h3v3H3zM9 3h3v3H9zM6 6h3v3H6zM12 6h2v3h-2zM3 9h3v3H3zM9 9h3v3H9z',sel:'fg M5 5h10v10H5z|sw M1 3h5M4 1v5',gizmo:'sw M8 1l6 4v6l-6 4-6-4V5z|sw O8,8,3',man:'fw M7 1h3v5l5 9h-3L9 10l-5 5H1l5-9z',rul:'fw M4 0h8v16H4z|sk M8 2h4M8 5h4M8 8h4M8 11h4',lockui:'sw M8 11H1V2h13v5M1 4h13|fw M9 9h6v6H9z',isol:'sw M1 2h6v5H1zM11 2h4v4h-4z|sw O4,12,2|sw M12 8l3 6H9z',perf:'sw O8,8,6|fw M8 9l5-6-3 7z',full:'sw M1 2h14v12H1z|sw M4 6V4h3M12 9v3H9M5 11l2-2M10 6l2-2',ham:'sw M0 3h16M0 8h16M0 13h16',
bars:'fw M1 3h3v11H1zM5 1h2v13H5zM8 5h2v9H8zM12 3l3 11h-2L11 4z',cal:'sw M1 3h14v11H1zM1 6h14M1 10h14M6 3v11M10 3v11',oo:'sw O8,8,6|sw M5 6v4M8 6v4M11 6v4',check:'sw M2 2h12v12H2zM5 7l3 4 5-7',wt:'sw M1 8l5-3h8l1 3-5 3H2z',glass:'sw O4,9,3|sw O12,9,3|sw M7 7h2',chart:'fw M1 14V2h2v9l2-6 2 6 2-4 2 4V4h3v10z',tag2:'sw O6,10,4|sw O13,3,2|sw M5 9v2'};
const O={pen:'so M6 15L14 7',lens:'sb O11,10,3|sw M13 12l2 3',bup:'fb M9 9h6v4H9z|sb M12 8v7',rx:'sr M9 2l5 5M14 2L9 7',gp:'sg M12 8v7M8 12h7',clip:'sb O8,5,3',bulb:'fy O13,12,3',disk:'fw M8 8h7v7H8z|fk M10 9h3v2h-3z',info:'fb O11,11,4',gc:'fg O11,12,3',c:'fb O11,9,4',lock:'fg M9 9h6v6H9z',lk:'fy M9 9h6v6H9z|sw M10 9V6h4v3',sq:'fb M8 7h6v6H8z',x:'sw M8 6l6 6M14 6l-6 6',z:'sb M9 5h4l-4 5h5',sheetb:'fb M8 7h6v8H8z',y:'fy M10 9h5v5h-5z',u:'sb M2 15h12',cur:'fg M8 8l7 5-4 2z'};
const K={w:'currentColor',b:'#78bdea',y:'#ebcf72',r:'#d85f68',g:'#68ca97',o:'#e9a47c',k:'#2b3440',h:'rgba(40,40,40,.4)',Y:'#f0a020',B:'#2c99ec',O:'#ca6c3f'};
const T={o:'#eda77f',y:'#e3c870',b:'#83c5f2',w:'#e8eaec',r:'#d7707a',k:'#444',d:'#69717d',o2:'#d9dce0'};
function layers(s){return s.split('|').map(l=>{
  const d=l.slice(3).replace(/O([\d.]+),([\d.]+),([\d.]+)/g,(m,x,y,r)=>`M${x-r} ${y}a${r} ${r} 0 1 0 ${2*r} 0a${r} ${r} 0 1 0 ${-2*r} 0`);
  const c=K[l[1]];return `<path d="${d}" fill-rule="evenodd" ${l[0]=='f'?`fill="${c}"`:`stroke="${c}"`}/>`}).join('')}
function draw(tok){const [b,...ov]=tok.replace('!','').split('+');const [n,t]=b.split('.');
  return [layers(G[n]||G.rect)+ov.map(o=>O[o]?layers(O[o]):'').join(''),t?T[t]:'']}
document.querySelectorAll('[data-i]').forEach(el=>{
  el.innerHTML=el.dataset.i.split(' ').map(t=>{
    if(t=='|')return '<i class="sp"></i>';if(t=='||')return '<i class="grip"></i>';
    const [p,c]=draw(t);
    return `<button type="button" class="btn tbtn${t=='dot'?' tiny':''}${t.endsWith('!')?' hot':''}" aria-label="${t.replace(/\W/g,' ')}"><svg class="ic" viewBox="0 0 16 16"${c?` color="${c}"`:''}>${p}</svg></button>`}).join('');
  if(el.dataset.s)el.querySelectorAll('.tbtn').forEach(b=>{b.style.width='11px';b.style.height='11px'})});
document.querySelectorAll('[data-g]').forEach(s=>{const [p,c]=draw(s.dataset.g);s.setAttribute('viewBox','0 0 16 16');if(c)s.setAttribute('color',c);s.innerHTML=p});
document.getElementById('menu').innerHTML='File Edit View Insert Format Tools Draw Dimension Modify Parametric Express Window Help'.split(' ').map(m=>`<a href="#">${m}</a>`).join('');
document.getElementById('ptabs').innerHTML=['Halil GÜLER','Library','Custom','Architectural','Identify','Views &amp; Shade','Layout','Utilities','Tools'].map((t,i)=>`<button type="button" class="${i?'':'on'}">${t}</button>`).join('');
document.getElementById('plist').innerHTML=[['Equipment Catalog','bars'],['Edit equipment','chart+x'],['User library','chart'],['Replace Equipment','perpW'],['Replace data/DWG','boxes'],['Custom Worktop','wt'],['Custom Fabrication','table'],['Extrude shape','iso'],['External shape','plane'],['DROP ins','wt'],['Rotate Tag','oo'],['On/Off Tags','tag2'],['Tag Non-Catalog Items','oo'],['Tag Equipment','oo'],['On/Off Tags','tag2'],['Schedules','cal'],['Join items','join'],['Combine Items','arr'],['Make Group/ Block','array'],['Ungroup Group','array'],['PickStyle','tag2'],['On/Off Layer 2D','isol'],['On/Off Layer 3D','isol'],['Frontal Tag','gizmo'],['Rotate Tag','oo'],['Check Childs Integrity','check'],['Equipment Catalog','bars'],['Reset Zone and Position','oo'],['2D/3D View','mesh'],['Elevation View','glass'],['Automatic Render','ring'],['Setup sheet','gear'],['Totals Plan','chart']].map(([t,g])=>`<li><a href="#"><svg class="ic" viewBox="0 0 16 16">${draw(g)[0]}</svg>${t}</a></li>`).join('');
</script>
</body>
</html>
